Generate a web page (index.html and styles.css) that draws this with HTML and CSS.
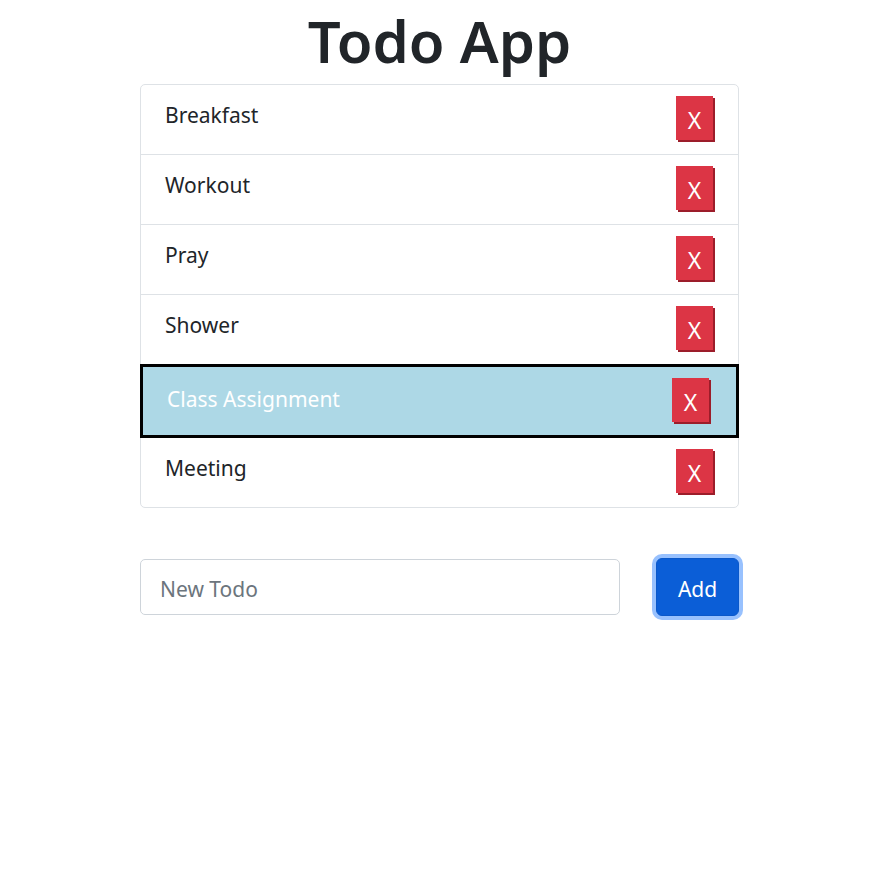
FILE: index.html
```html
<!DOCTYPE html>
<html>
<head>
<meta charset="utf-8">
<link rel="stylesheet" href="styles.css">
</head>
<body>
<div class="app">
  <h1 class="title">Todo App</h1>
  <ul class="list">
    <li class="item"><span class="label">Breakfast</span><button class="del">X</button></li>
    <li class="item"><span class="label">Workout</span><button class="del">X</button></li>
    <li class="item"><span class="label">Pray</span><button class="del">X</button></li>
    <li class="item"><span class="label">Shower</span><button class="del">X</button></li>
    <li class="item active"><span class="label">Class Assignment</span><button class="del">X</button></li>
    <li class="item last"><span class="label">Meeting</span><button class="del">X</button></li>
  </ul>
  <form class="add-form">
    <input class="new-input" type="text" placeholder="New Todo">
    <button type="button" class="add-btn">Add</button>
  </form>
</div>
</body>
</html>
```

FILE: styles.css
```css
* { box-sizing: border-box; }
body {
  margin: 0;
  background: #fff;
  font-family: "Noto Sans", "Open Sans", sans-serif;
  color: #212529;
}
.app {
  width: 599px;
  margin: 0 auto;
  padding-bottom: 40px;
}
.title {
  margin: 0;
  padding-top: 3px;
  height: 84px;
  text-align: center;
  font-size: 58px;
  font-weight: 600;
  line-height: 76px;
  color: #212529;
}
.list {
  list-style: none;
  margin: 0;
  padding: 0;
  border: 1px solid #dee2e6;
  border-radius: 5px;
  width: 599px;
}
.item {
  display: flex;
  align-items: center;
  justify-content: space-between;
  height: 70px;
  padding: 0 24px 0 24px;
  border-bottom: 1px solid #dee2e6;
  font-size: 21px;
}
.item.last { border-bottom: none; height: 69px; }
.label { margin-top: -10px; }
.del {
  width: 37px;
  height: 44px;
  margin-right: 1px;
  margin-top: -3px;
  background: #dc3545;
  color: #fff;
  border: none;
  border-radius: 0;
  box-shadow: 2px 2px 0 #9c1d2a;
  font-family: inherit;
  font-size: 23px;
  padding: 0;
  padding-top: 4px;
  line-height: 40px;
}
.item.active {
  background: #add8e6;
  color: #fff;
  border: 3px solid #000;
  height: 74px;
  margin: -1px -1px 0 -1px;
  padding: 0 26px 0 24px;
}
.item.active .label { margin-top: -4px; }
.item.active .del { margin-top: -2px; }
.add-form {
  display: flex;
  align-items: center;
  justify-content: space-between;
  margin-top: 50px;
  width: 603px;
}
.new-input {
  width: 480px;
  height: 56px;
  border: 1px solid #ced4da;
  border-radius: 5px;
  padding: 4px 19px 0;
  font-family: inherit;
  font-size: 21px;
  color: #212529;
}
.new-input::placeholder { color: #6c757d; }
.add-btn {
  width: 83px;
  height: 58px;
  margin-right: 4px;
  background: #0b5ed7;
  color: #fff;
  border: 1px solid #0a58ca;
  border-radius: 6px;
  box-shadow: 0 0 0 4px #98c1fe;
  font-family: inherit;
  font-size: 21px;
  padding: 4px 0 0;
}
```
